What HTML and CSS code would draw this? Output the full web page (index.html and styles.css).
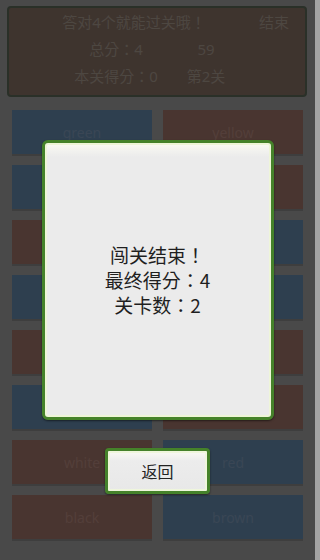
FILE: index.html
```html
<!DOCTYPE html>
<html lang="zh">
<head>
<meta charset="utf-8">
<title>闯关</title>
<link rel="stylesheet" href="styles.css">
</head>
<body>
<div class="app">
  <div class="panel">
    <div class="row row-top">
      <span class="cell">答对4个就能过关哦！</span>
      <span class="cell">结束</span>
    </div>
    <div class="row row-pair">
      <span class="cell">总分：4</span>
      <span class="cell">59</span>
    </div>
    <div class="row row-pair">
      <span class="cell">本关得分：0</span>
      <span class="cell">第2关</span>
    </div>
  </div>
  <div class="grid">
    <div class="btn blue"><span class="t-blue">green</span></div>
    <div class="btn brown"><span class="t-brown">yellow</span></div>
    <div class="btn blue"><span class="t-blue">red</span></div>
    <div class="btn brown"><span class="t-brown">blue</span></div>
    <div class="btn brown"><span class="t-brown">green</span></div>
    <div class="btn blue"><span class="t-blue">black</span></div>
    <div class="btn blue"><span class="t-blue">yellow</span></div>
    <div class="btn blue"><span class="t-blue">red</span></div>
    <div class="btn brown"><span class="t-brown">blue</span></div>
    <div class="btn brown"><span class="t-brown">white</span></div>
    <div class="btn blue"><span class="t-blue">brown</span></div>
    <div class="btn brown"><span class="t-brown">green</span></div>
    <div class="btn brown"><span class="t-brown">white</span></div>
    <div class="btn blue"><span class="t-blue">red</span></div>
    <div class="btn brown"><span class="t-brown">black</span></div>
    <div class="btn blue"><span class="t-blue">brown</span></div>
  </div>
</div>
<div class="overlay">
  <div class="dialog">
    <div class="msg">
      <div class="line">闯关结束！</div>
      <div class="line">最终得分：4</div>
      <div class="line">关卡数：2</div>
    </div>
  </div>
  <button class="back">返回</button>
</div>
</body>
</html>
```
FILE: styles.css
```css
html, body {
  margin: 0;
  padding: 0;
}
body {
  width: 315px;
  height: 560px;
  overflow: hidden;
  background: #a3a3a3;
  font-family: "Noto Sans", "Noto Sans CJK TC", sans-serif;
  font-feature-settings: "locl" 0;
  position: relative;
}
.app {
  padding-top: 6px;
}
.panel {
  box-sizing: border-box;
  margin: 0 8px 0 7px;
  height: 91px;
  border: 2px solid #5d6b5a;
  border-radius: 4px;
  background: #8a7367;
  color: #aa9d91;
  font-size: 15px;
  padding-top: 0;
}
.row {
  display: grid;
  height: 27px;
  align-items: center;
  text-align: center;
  line-height: 20px;
}
.row-top {
  grid-template-columns: 250px 30px;
}
.row-pair {
  grid-template-columns: 90px 90px;
  justify-content: center;
  padding-left: 8px;
}
.grid {
  margin-top: 13px;
  padding: 0 12px;
  display: grid;
  grid-template-columns: 140px 140px;
  grid-auto-rows: 44px;
  column-gap: 11px;
  row-gap: 11px;
}
.btn {
  display: flex;
  align-items: center;
  justify-content: center;
  font-size: 14px;
  box-shadow: 0 2px 0 rgba(0, 0, 0, 0.15);
}
.blue { background: #668db0; }
.brown { background: #a3766b; }
.t-blue { color: #809cbc; }
.t-brown { color: #b88b80; }

.overlay {
  position: absolute;
  inset: 0;
  background: rgba(0, 0, 0, 0.55);
  display: flex;
  flex-direction: column;
  align-items: center;
  padding-top: 140px;
  box-sizing: border-box;
}
.dialog {
  box-sizing: border-box;
  width: 232px;
  height: 280px;
  border: 3px solid #45822a;
  border-radius: 6px;
  background: linear-gradient(#fdfdf6 0, #f4f4f0 6px, #ebebeb 14px);
  box-shadow: inset 0 0 0 2px #eef5d8, 0 1px 2px rgba(0, 0, 0, 0.5);
  display: flex;
  align-items: center;
  justify-content: center;
}
.msg {
  font-family: "Noto Sans CJK TC", "Noto Sans", sans-serif;
  font-size: 19px;
  color: #1f1f1f;
  text-align: center;
  margin-top: -2px;
}
.line {
  height: 25px;
  line-height: 25px;
}
.back {
  margin-top: 28px;
  box-sizing: border-box;
  width: 105px;
  height: 46px;
  border: 3px solid #45822a;
  border-radius: 4px;
  background: linear-gradient(#fbfbf4 0, #ececec 10px, #e8e8e8 100%);
  box-shadow: inset 0 0 0 2px #eff6dc, 0 1px 2px rgba(0, 0, 0, 0.5);
  font-family: "Noto Sans CJK TC", "Noto Sans", sans-serif;
  font-size: 16px;
  color: #222;
  padding: 0;
}
```
